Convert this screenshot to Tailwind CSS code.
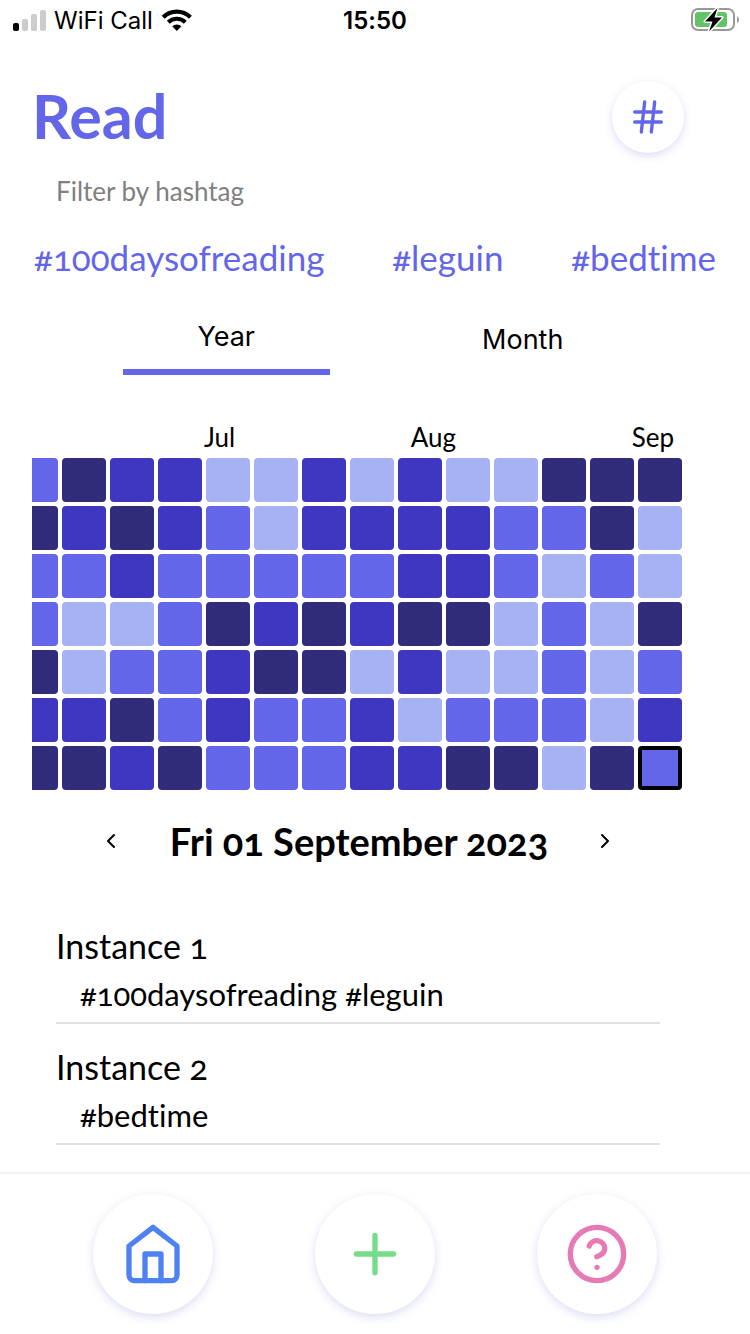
<!DOCTYPE html>
<html lang="en">
<head>
<meta charset="utf-8">
<meta name="viewport" content="width=device-width, initial-scale=1">
<title>Read</title>
<script src="https://cdn.jsdelivr.net/npm/@tailwindcss/browser@4"></script>
</head>
<body class="bg-white">
<div class="flex min-h-screen flex-col overflow-hidden bg-white font-['Lato',sans-serif] text-black oldstyle-nums [font-variant-ligatures:none]">
  <!-- Status bar -->
  <div class="grid h-10 grid-cols-3 items-center pt-0.5 pl-3 pr-2 font-['Inter',sans-serif] text-2xl lining-nums">
    <div class="flex items-center gap-2">
      <svg class="h-6 w-[34px]" viewBox="0 0 34 24" aria-hidden="true">
        <rect x="1" y="14" width="6" height="8" rx="2" fill="#000"/>
        <rect x="10" y="10" width="6" height="12" rx="2" fill="#ccc"/>
        <rect x="19" y="5" width="6" height="17" rx="2" fill="#ccc"/>
        <rect x="28" y="1" width="6" height="21" rx="2" fill="#ccc"/>
      </svg>
      <span class="whitespace-nowrap">WiFi Call</span>
      <svg class="h-6 w-8" viewBox="0 1 32 24" fill="none" stroke="#000" aria-hidden="true">
        <path d="M2.200 9.200a19.500 19.500 0 0 1 27.200 0" stroke-width="4.200"/>
        <path d="M7.300 14.200a12.200 12.200 0 0 1 17 0" stroke-width="4"/>
        <path d="M15.800 23l-4.600-4.700a6.600 6.600 0 0 1 9.200 0z" fill="#000" stroke="none"/>
      </svg>
    </div>
    <time class="pr-1 text-center font-semibold">15:50</time>
    <svg class="h-7 w-13 justify-self-end" viewBox="-1 1 52 28" aria-hidden="true">
      <rect x="1" y="3" width="42" height="21" rx="6" fill="none" stroke="#999" stroke-width="2"/>
      <path d="M46 10v7q2-1 2-3.500t-2-3.500z" fill="#999"/>
      <rect x="4" y="6" width="32" height="15" rx="3" fill="#62c466"/>
      <path d="M26.500 2L14 15.500h7.500L18 25.500l13-14h-7.500z" fill="#000" stroke="#fff" stroke-width="3" paint-order="stroke" stroke-linejoin="round"/>
    </svg>
  </div>

  <main class="flex flex-1 flex-col">
    <header class="mt-[41px] flex items-start justify-between pl-8 pr-[66px]">
      <h1 class="text-[61px] leading-[70px] font-bold text-[#6366e9]">Read</h1>
      <button type="button" aria-label="Hashtags" class="flex size-18 items-center justify-center rounded-full bg-white text-[#6366e9] shadow-[0_3px_8px_rgba(80,90,200,0.2)]">
        <svg class="size-10" viewBox="0 0 24 24" fill="none" stroke="currentColor" stroke-width="2" stroke-linecap="round" stroke-linejoin="round"><path d="M4 9h16M4 15h16M10 3L8 21M16 3l-2 18"/></svg>
      </button>
    </header>

    <p class="mt-5 pl-14 text-[26px] leading-9 text-[#808080]">Filter by hashtag</p>
    <nav aria-label="Hashtags" class="mt-6 flex justify-between gap-8 pl-[34px] pr-[34px] text-[35px] leading-12 whitespace-nowrap text-[#6366e9]">
      <a href="#100daysofreading">#100daysofreading</a>
      <a href="#leguin">#leguin</a>
      <a href="#bedtime">#bedtime</a>
    </nav>

    <div role="tablist" class="mt-6 grid grid-cols-2 pl-[78px] pr-[79px] font-['Inter',sans-serif] text-[27px]">
      <button type="button" role="tab" aria-selected="true" class="mx-[45px] h-[70px] border-b-6 border-[#6366e9]">Year</button>
      <button type="button" role="tab" aria-selected="false" class="mx-[45px] h-[70px]">Month</button>
    </div>

    <section aria-label="Activity" class="mt-11 ml-8 mr-[68px]">
      <div class="flex justify-between pl-[172px] pr-2 text-[26px] leading-9"><span>Jul</span><span>Aug</span><span>Sep</span></div>
      <div class="flex justify-end overflow-hidden">
        <div id="days" class="mt-[3px] grid shrink-0 grid-flow-col grid-rows-7 gap-1"></div>
      </div>
    </section>

    <div class="mt-[23px] flex items-center justify-between pl-24 pr-32">
      <button type="button" aria-label="Previous day" class="flex h-14 w-8 items-center justify-center"><svg class="size-8" viewBox="0 0 24 24" fill="none" stroke="#000" stroke-width="1.500" stroke-linecap="round" stroke-linejoin="round"><path d="M13.500 7.500L9 12l4.500 4.500"/></svg></button>
      <h2 class="text-[38px] leading-14 font-bold whitespace-nowrap">Fri 01 September 2023</h2>
      <button type="button" aria-label="Next day" class="flex h-14 w-8 items-center justify-center"><svg class="size-8" viewBox="0 0 24 24" fill="none" stroke="#000" stroke-width="1.500" stroke-linecap="round" stroke-linejoin="round"><path d="M9 7.500l4.500 4.500L9 16.500"/></svg></button>
    </div>

    <ul class="mt-[34px] ml-14 mr-[90px]">
      <li class="border-b-2 border-[#e1e1e1] pt-[19px] pb-1">
        <h3 class="text-[34px] leading-12">Instance 1</h3>
        <p class="pl-6 text-[31px] leading-12">#100daysofreading #leguin</p>
      </li>
      <li class="border-b-2 border-[#e1e1e1] pt-[19px] pb-1">
        <h3 class="text-[34px] leading-12">Instance 2</h3>
        <p class="pl-6 text-[31px] leading-12">#bedtime</p>
      </li>
    </ul>
  </main>

  <nav aria-label="Main" class="flex justify-around border-t-2 border-[#eff4fb] px-[42px] py-5">
    <a href="#home" aria-label="Home" class="flex size-30 items-center justify-center rounded-full bg-white text-[#4e82f0] shadow-[0_3px_10px_rgba(80,90,200,0.2)]">
      <svg class="size-16" viewBox="0 0 24 24" fill="none" stroke="currentColor" stroke-width="2" stroke-linecap="round" stroke-linejoin="round"><path d="M3 9l9-7 9 7v11a2 2 0 0 1-2 2H5a2 2 0 0 1-2-2z"/><path d="M9 22V12h6v10"/></svg>
    </a>
    <button type="button" aria-label="Add" class="flex size-30 items-center justify-center rounded-full bg-white text-[#77dc8a] shadow-[0_3px_10px_rgba(80,90,200,0.2)]">
      <svg class="size-16" viewBox="0 0 24 24" fill="none" stroke="currentColor" stroke-width="2" stroke-linecap="round"><path d="M12 5v14M5 12h14"/></svg>
    </button>
    <a href="#help" aria-label="Help" class="flex size-30 items-center justify-center rounded-full bg-white text-[#e57ab4] shadow-[0_3px_10px_rgba(80,90,200,0.2)]">
      <svg class="size-16" viewBox="0 0 24 24" fill="none" stroke="currentColor" stroke-width="2" stroke-linecap="round" stroke-linejoin="round"><circle cx="12" cy="12" r="10"/><path d="M9.090 9a3 3 0 0 1 5.830 1c0 2-3 3-3 3M12 17h.01"/></svg>
    </a>
  </nav>
</div>
<script>
  // One string per week, one digit per day: 1 = lightest, 4 = darkest
  const weeks = ["2422434", "4321134", "3431243", "3322224", "1224332", "1123422", "3324422",
                 "1323133", "3334313", "1334124", "1221124", "4212221", "4421114", "4114232"];
  const shades = { 1: "bg-[#a7b2f5]", 2: "bg-[#6366e9]", 3: "bg-[#4037c1]", 4: "bg-[#312c7a]" };
  const days = document.getElementById("days");
  weeks.forEach((week, w) => [...week].forEach((level, d) => {
    const cell = document.createElement("button");
    cell.type = "button";
    cell.ariaLabel = `Week ${w + 1}, day ${d + 1}`;
    const selected = w === weeks.length - 1 && d === 6;
    cell.className = "size-11 rounded-sm " + shades[level] + (selected ? " border-4 border-black" : "");
    days.append(cell);
  }));
</script>
</body>
</html>
